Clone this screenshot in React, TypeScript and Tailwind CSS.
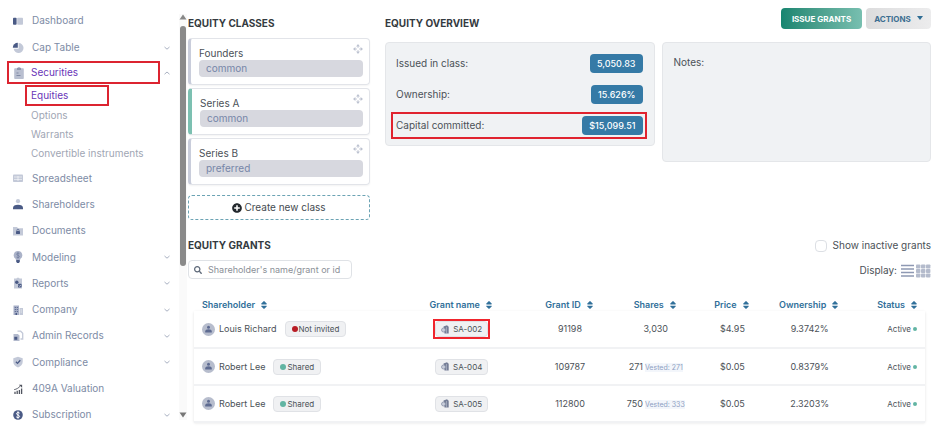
import React from "react";
import { FaPlusCircle, FaSearch, FaSort } from "react-icons/fa";

const soft = "#c3c9d8";
const dark = "#4a5a85";

function Icon({ children }: { children: React.ReactNode }) {
  return (
    <svg viewBox="0 0 12 12" className="size-3 shrink-0" aria-hidden="true">
      {children}
    </svg>
  );
}

const icons: Record<string, React.ReactNode> = {
  dashboard: (
    <>
      <rect x="1" y="2.8" width="3.6" height="7" rx="0.8" fill={dark} />
      <rect x="5.2" y="2.8" width="5.8" height="7" rx="0.8" fill={soft} />
    </>
  ),
  cap: (
    <>
      <path d="M6.6 1a5 5 0 1 1-5 5.8h5z" fill={soft} />
      <path d="M5.8 .8v5H.8A5 5 0 0 1 5.8 .8z" fill={dark} />
    </>
  ),
  securities: (
    <>
      <path d="M2 1.2h2.400a1.600 1.300 0 0 1 3.200 0H10a.8.8 0 0 1 .8.8v9.200a.8.8 0 0 1-.8.8H2a.8.8 0 0 1-.8-.8V2a.8.8 0 0 1 .8-.8z" fill="#b9bfd0" />
      <path d="M4 1h4v2H4z" fill="#8f97ad" />
      <path d="M3.500 6h2M3.500 8.500h4" stroke="#7b84a0" strokeWidth="0.900" />
    </>
  ),
  spreadsheet: (
    <>
      <rect x="1" y="2.500" width="10" height="7.500" rx="0.800" fill={soft} />
      <path d="M2 5h8M2 7.400h8M6 4v5" stroke="#fff" strokeWidth="0.600" />
    </>
  ),
  shareholders: (
    <>
      <circle cx="6" cy="3.200" r="2.100" fill={soft} />
      <path d="M1 11.200V10c0-2.200 2-3.300 5-3.300s5 1.100 5 3.300v1.200z" fill={dark} />
    </>
  ),
  documents: (
    <>
      <path d="M1 2h4l1 1.300h5v7.200H1z" fill={soft} />
      <rect x="4" y="6" width="4" height="3" rx="0.400" fill={dark} />
      <path d="M4.900 6V5.300a1.100 1.100 0 0 1 2.200 0V6" fill="none" stroke={dark} strokeWidth="0.700" />
    </>
  ),
  modeling: (
    <>
      <path d="M6 0a4.300 4.300 0 0 0-2.200 8v1h4.400V8A4.300 4.300 0 0 0 6 0z" fill="#aab2c8" />
      <path d="M7.400 2.600C6.600 1.800 4.600 2 4.700 3.200S7.400 4.400 7.400 5.600 5.300 7 4.500 6.100M6 1.400v6" fill="none" stroke="#6d789b" strokeWidth="0.700" />
      <path d="M4.200 9h3.600v1.500L7 12H5l-.8-1.500z" fill={dark} />
    </>
  ),
  reports: (
    <>
      <path d="M2 1.500h2.500l.5-.8h2l.5.8H10V11.500H2z" fill={soft} />
      <circle cx="4.800" cy="5.300" r="1.700" fill={dark} />
      <rect x="6" y="6.800" width="3.600" height="3.600" rx="0.600" fill={dark} />
      <path d="M6.800 8.600l.8.8 1.300-1.500" fill="none" stroke="#fff" strokeWidth="0.600" />
    </>
  ),
  company: (
    <>
      <path d="M1.500 1.500H7V11H1.500z" fill="#a6aec6" />
      <path d="M7.500 4H11v7H7.500z" fill={soft} />
      <path d="M3.300 3v5M5.300 3v5" stroke={dark} strokeWidth="0.900" strokeDasharray="1 1" />
      <path d="M3.500 9h1.500v2H3.500z" fill={dark} />
      <path d="M9.200 5.500v4" stroke="#fff" strokeWidth="0.800" strokeDasharray="1 1" />
    </>
  ),
  admin: (
    <>
      <path d="M5.500 1.200h3.200l2 2V9H8.500" fill="none" stroke={soft} strokeWidth="1.300" />
      <path d="M1.500 4h4.300l1.700 1.500V11h-6z" fill="#b3bacd" />
      <path d="M2.300 6.800h3v3h-3z" fill={dark} />
    </>
  ),
  compliance: (
    <>
      <path d="M6 .8l4.700 1.500v3.500c0 2.700-2 4.600-4.700 5.600C3.300 10.400 1.300 8.500 1.300 5.800V2.300z" fill={soft} />
      <path d="M3.900 5.800l1.600 1.600L8.300 4.200" fill="none" stroke={dark} strokeWidth="1.300" />
    </>
  ),
  valuation: (
    <>
      <path d="M3 11V8.800M5.200 11V7.800M7.400 11V7M9.600 11V5.500" stroke="#50545f" strokeWidth="1.300" />
      <path d="M2.200 6.600C4.500 6.300 6.500 5 8.300 3" fill="none" stroke="#50545f" strokeWidth="0.900" />
      <path d="M6.800 1.800h3.300v3z" fill="#50545f" />
    </>
  ),
  subscription: (
    <>
      <circle cx="6" cy="6" r="4.800" fill={dark} />
      <path d="M7.700 4.200C7 3.200 4.500 3.300 4.500 4.700S7.600 6 7.600 7.400 5 8.900 4.200 7.800M6 2.300v7.400" fill="none" stroke="#fff" strokeWidth="1" />
    </>
  ),
};

function Chevron({ up = false }: { up?: boolean }) {
  return (
    <svg viewBox="0 0 8 6" className="h-1.5 w-2" aria-hidden="true">
      <path d={up ? "M1.500 4.200L4 2l2.500 2.200" : "M1.500 2L4 4.200 6.500 2"} fill="none" stroke="#a9b1c2" strokeWidth="1" />
    </svg>
  );
}

function NavItem({ icon, label, arrow }: { icon: string; label: string; arrow?: boolean }) {
  return (
    <a href="#" className="flex min-h-[26px] flex-1 items-center gap-2 pr-2 pl-3 text-[#7d8ba5]">
      <Icon>{icons[icon]}</Icon>
      <span className="flex-1">{label}</span>
      {arrow && <Chevron />}
    </a>
  );
}

function Sidebar() {
  return (
    <nav className="w-[179px] shrink-0 pt-[7px] text-[10px]">
      <div className="flex h-[54px] flex-col">
        <NavItem icon="dashboard" label="Dashboard" />
        <NavItem icon="cap" label="Cap Table" arrow />
      </div>
      <div className="flex items-center pr-2 pl-[7px]">
        <a href="#" className="flex h-[23px] w-[153px] items-center gap-1.5 border-2 border-[#dc2430] pl-1 text-[#6a35b8]">
          <Icon>{icons.securities}</Icon>
          Securities
        </a>
        <span className="ml-auto"><Chevron up /></span>
      </div>
      <div className="flex flex-col pt-px pb-0.5 pl-[25px] text-[#9fa6b4]">
        <a href="#" className="flex h-[21px] w-[84px] items-center border-2 border-[#dc2430] pl-1 text-[#6a35b8]">Equities</a>
        <a href="#" className="flex h-[19px] items-center pl-1.5">Options</a>
        <a href="#" className="flex h-[19px] items-center pl-1.5">Warrants</a>
        <a href="#" className="flex h-[19px] items-center pl-1.5">Convertible instruments</a>
      </div>
      <div className="flex h-[263px] flex-col">
        <NavItem icon="spreadsheet" label="Spreadsheet" />
        <NavItem icon="shareholders" label="Shareholders" />
        <NavItem icon="documents" label="Documents" />
        <NavItem icon="modeling" label="Modeling" arrow />
        <NavItem icon="reports" label="Reports" arrow />
        <NavItem icon="company" label="Company" arrow />
        <NavItem icon="admin" label="Admin Records" arrow />
        <NavItem icon="compliance" label="Compliance" arrow />
        <NavItem icon="valuation" label="409A Valuation" />
        <NavItem icon="subscription" label="Subscription" arrow />
      </div>
    </nav>
  );
}

function ScrollTrack() {
  return (
    <div className="mt-3.5 mb-2 flex w-2 shrink-0 flex-col items-center bg-[#fafafa]" aria-hidden="true">
      <svg viewBox="0 0 8 6" className="h-1.5 w-2"><path d="M4 .5L7.500 5.500h-7z" fill="#888" /></svg>
      <div className="mt-1.5 h-60 w-1.5 rounded-full bg-[#8a8a8a]" />
      <svg viewBox="0 0 8 6" className="mt-auto mb-0.5 h-1.5 w-2"><path d="M4 5.500L7.500.5h-7z" fill="#777" /></svg>
    </div>
  );
}

function MoveIcon() {
  return (
    <svg viewBox="0 0 10 10" className="mt-px size-2.5" aria-hidden="true">
      <path d="M5 0l1.900 2.400H3.100zM5 10L3.100 7.600h3.800zM0 5l2.400-1.900v3.800zM10 5L7.600 6.900V3.100z" fill="#bcc2d0" />
      <path d="M5 2v2M5 6v2M2 5h2M6 5h2" stroke="#bcc2d0" strokeWidth="0.800" />
    </svg>
  );
}

const classes = [
  { name: "Founders", kind: "common", active: false },
  { name: "Series A", kind: "common", active: true },
  { name: "Series B", kind: "preferred", active: false },
];

function EquityClasses() {
  return (
    <section className="w-[182px] shrink-0">
      <h2 className="pt-4 text-[10px] leading-[14px] font-bold text-[#343a40]">EQUITY CLASSES</h2>
      <div className="mt-2 flex flex-col gap-[3px]">
        {classes.map((c) => (
          <article
            key={c.name}
            className={`flex h-[47px] flex-col rounded-sm border border-[#e2e4e9] pr-1.5 pl-2 shadow-xs ${c.active ? "border-l-4 border-l-[#7cc0b1]" : "border-l-3 border-l-[#c9cddb]"}`}
          >
            <div className="flex h-[21px] justify-between pt-1">
              <h3 className="pt-[3px] text-[10px] leading-[15px] text-[#4b5157]">{c.name}</h3>
              <MoveIcon />
            </div>
            <div className="h-[17px] rounded-sm bg-[#d7d8df] pl-[7px] text-[10px] leading-[17px] text-[#7686a8]">{c.kind}</div>
          </article>
        ))}
      </div>
      <button className="mt-2.5 flex h-[25px] w-full items-center justify-center gap-0.5 rounded-sm border border-dashed border-[#6ba3b4] text-[10px] text-[#454b51]">
        <FaPlusCircle className="size-2.5 text-[#23282d]" />
        Create new class
      </button>
    </section>
  );
}

const stats = [
  { label: "Issued in class:", value: "5,050.83" },
  { label: "Ownership:", value: "15.626%" },
  { label: "Capital committed:", value: "$15,099.51", marked: true },
];

function Overview() {
  return (
    <section className="min-w-0 flex-1">
      <div className="flex h-[42px] items-start justify-between pt-2">
        <h2 className="pt-2 text-[10px] leading-[14px] font-bold text-[#343a40]">EQUITY OVERVIEW</h2>
        <div className="flex gap-1">
          <button className="h-[21px] w-[81px] rounded-sm bg-linear-to-r from-[#158570] to-[#78bfb0] text-[8px] font-bold text-white">ISSUE GRANTS</button>
          <button className="flex h-[21px] w-[65px] items-center justify-center gap-1.5 rounded-sm bg-linear-to-r from-[#dcdcdd] to-[#ececed] text-[8px] font-bold text-[#3c6e91]">
            ACTIONS
            <svg viewBox="0 0 6 4" className="mb-0.5 h-1 w-1.5" aria-hidden="true"><path d="M0 0h6L3 4z" fill="#2f6d94" /></svg>
          </button>
        </div>
      </div>
      <div className="grid grid-cols-2 items-start gap-[7px]">
        <dl className="flex h-[104px] flex-col gap-1 rounded-sm border border-[#e4e6e9] bg-[#f0f2f4] pt-[7px] pr-[7px] pl-[5px] text-[10px] text-[#4b5157]">
          {stats.map((s) => (
            <div key={s.label} className={`flex h-[27px] items-center justify-between border-2 pr-0.5 pl-[3px] ${s.marked ? "border-[#e0232f]" : "border-transparent"}`}>
              <dt>{s.label}</dt>
              <dd className="rounded-sm bg-[#357aa6] px-[7px] text-[9px] leading-[19px] font-medium text-white">{s.value}</dd>
            </div>
          ))}
        </dl>
        <div className="h-[120px] rounded-sm border border-[#e4e6e9] bg-[#f0f2f4] px-[11px] pt-3 text-[10px] leading-[14px] text-[#4b5157]">Notes:</div>
      </div>
    </section>
  );
}

// Widths are shares of the table: the fixed layout scales them to the space there is.
const columns = [
  { name: "Shareholder", width: "w-[199px]" },
  { name: "Grant name", width: "w-[136px]" },
  { name: "Grant ID", width: "w-[80px]" },
  { name: "Shares", width: "w-[91px]" },
  { name: "Price", width: "w-[62px]" },
  { name: "Ownership", width: "w-[92px]" },
  { name: "Status", width: "w-[69px]" },
];

const rows = [
  { who: "Louis Richard", state: "Not invited", dot: "bg-[#b81c25]", grant: "SA-002", id: "91198", shares: "3,030", vested: "", price: "$4.95", own: "9.3742%", marked: true },
  { who: "Robert Lee", state: "Shared", dot: "bg-[#62b5a3]", grant: "SA-004", id: "109787", shares: "271", vested: "Vested: 271", price: "$0.05", own: "0.8379%", marked: false },
  { who: "Robert Lee", state: "Shared", dot: "bg-[#62b5a3]", grant: "SA-005", id: "112800", shares: "750", vested: "Vested: 333", price: "$0.05", own: "2.3203%", marked: false },
];

function Avatar() {
  return (
    <svg viewBox="0 0 13 13" className="size-[13px]" aria-hidden="true">
      <circle cx="6.500" cy="6.500" r="6.500" fill="#b7bdcd" />
      <circle cx="6.500" cy="4.300" r="1.500" fill="#5e6b91" />
      <path d="M3.200 9.500V8.500C3.200 7 4.500 6.300 6.500 6.300s3.300.7 3.300 2.200v1z" fill="#5e6b91" />
    </svg>
  );
}

function GrantIcon() {
  return (
    <svg viewBox="0 0 8 9" className="h-[9px] w-2" aria-hidden="true">
      <path d="M2.500 1.500L6 .3 7.700 1.700V8.500H3.500z" fill="#747d96" />
      <circle cx="2.500" cy="5" r="2" fill="#c9cedb" stroke="#8c94aa" strokeWidth="0.800" />
      <path d="M5.500 2v6.500" stroke="#c9cedb" strokeWidth="0.500" />
    </svg>
  );
}

function Grants() {
  return (
    <section>
      <div className="flex items-start justify-between">
        <div>
          <h2 className="text-[10px] leading-[14px] font-bold text-[#343a40]">EQUITY GRANTS</h2>
          <label className="mt-2 flex h-[19px] w-[164px] items-center gap-1.5 rounded-sm border border-[#dfe2e6] pl-[5px]">
            <FaSearch className="size-2 shrink-0 text-[#5d6878]" />
            <input type="text" aria-label="Search grants" placeholder="Shareholder's name/grant or id" className="w-full min-w-0 text-[9px] text-[#555] outline-none placeholder:text-[#8b9097]" />
          </label>
        </div>
        <div className="flex flex-col items-end gap-2.5 text-[10px] leading-[15px] text-[#4b5157]">
          <label className="flex items-center gap-1.5">
            <input type="checkbox" className="size-3 appearance-none rounded-sm border border-[#dcdfe4] bg-white" />
            Show inactive grants
          </label>
          <div className="flex items-center gap-1">
            Display:
            <div className="flex gap-0.5">
              <button aria-label="List">
                <svg viewBox="0 0 13 14" className="h-3.5 w-[13px]"><path d="M0 1.500h13M0 5h13M0 8.500h13M0 12h13" stroke="#8e99b3" strokeWidth="1.600" /></svg>
              </button>
              <button aria-label="Grid">
                <svg viewBox="0 0 15 14" className="h-3.5 w-[15px]">
                  {[0, 5, 10].map((x) => [0.5, 5, 9.5].map((y) => <rect key={`${x}-${y}`} x={x} y={y} width="4.400" height="4" rx="0.800" fill="#b4bbcc" />))}
                </svg>
              </button>
            </div>
          </div>
        </div>
      </div>
      <div className="mt-4 px-1.5">
        <table className="w-full table-fixed border-collapse text-[9px] text-[#4b5157]">
          <thead>
            <tr className="h-4">
              {columns.map((c, i) => (
                <th key={c.name} className={`${c.width} p-0 align-bottom leading-3 font-semibold text-[#31709a] ${i === 0 ? "pl-2 text-left" : i === 6 ? "pr-1.5 text-right" : "text-center"}`}>
                  <button className="inline-flex items-center gap-1 whitespace-nowrap">
                    {c.name}
                    <FaSort className="size-2.5" />
                  </button>
                </th>
              ))}
            </tr>
          </thead>
          <tbody className="shadow-sm">
            {rows.map((r) => (
              <tr key={r.grant} className="h-[37px] border-b-2 border-[#f1f2f4]">
                <td className="p-0 pl-2">
                  <div className="flex items-center">
                    <Avatar />
                    <span className="ml-1">{r.who}</span>
                    <span className="ml-2 flex h-4 items-center gap-px rounded-sm border border-[#e0e2e6] bg-[#f0f1f3] px-1.5 text-[8px]">
                      <span className={`size-1.5 rounded-full ${r.dot}`} />
                      {r.state}
                    </span>
                  </div>
                </td>
                <td className="p-0 text-center text-[8px]">
                  <span className={`inline-flex border-2 align-middle ${r.marked ? "border-[#f0252d]" : "border-transparent"}`}>
                    <a href="#" className="flex h-4 items-center gap-1 rounded-sm border border-[#e0e2e6] bg-[#f0f1f3] px-[5px]">
                      <GrantIcon />
                      {r.grant}
                    </a>
                  </span>
                </td>
                <td className="p-0 text-center">{r.id}</td>
                <td className="p-0 text-center whitespace-nowrap">
                  {r.shares}
                  {r.vested && <span className="ml-0.5 bg-[#f3f6fb] text-[7px] text-[#8f9fc2]">{r.vested}</span>}
                </td>
                <td className="p-0 text-center">{r.price}</td>
                <td className="p-0 text-center">{r.own}</td>
                <td className="p-0 pr-2 text-[8px]">
                  <span className="flex items-center justify-end gap-0.5">
                    Active
                    <span className="size-1 rounded-full bg-[#62b5a3]" />
                  </span>
                </td>
              </tr>
            ))}
          </tbody>
        </table>
      </div>
    </section>
  );
}

export default function App() {
  return (
    <div className="flex bg-white font-['Inter','Liberation_Sans',sans-serif]">
      <Sidebar />
      <ScrollTrack />
      <main className="min-w-0 flex-1 pr-2 pl-px">
        <div className="flex items-start gap-[15px]">
          <EquityClasses />
          <Overview />
        </div>
        <div className="mt-[18px]">
          <Grants />
        </div>
      </main>
    </div>
  );
}
